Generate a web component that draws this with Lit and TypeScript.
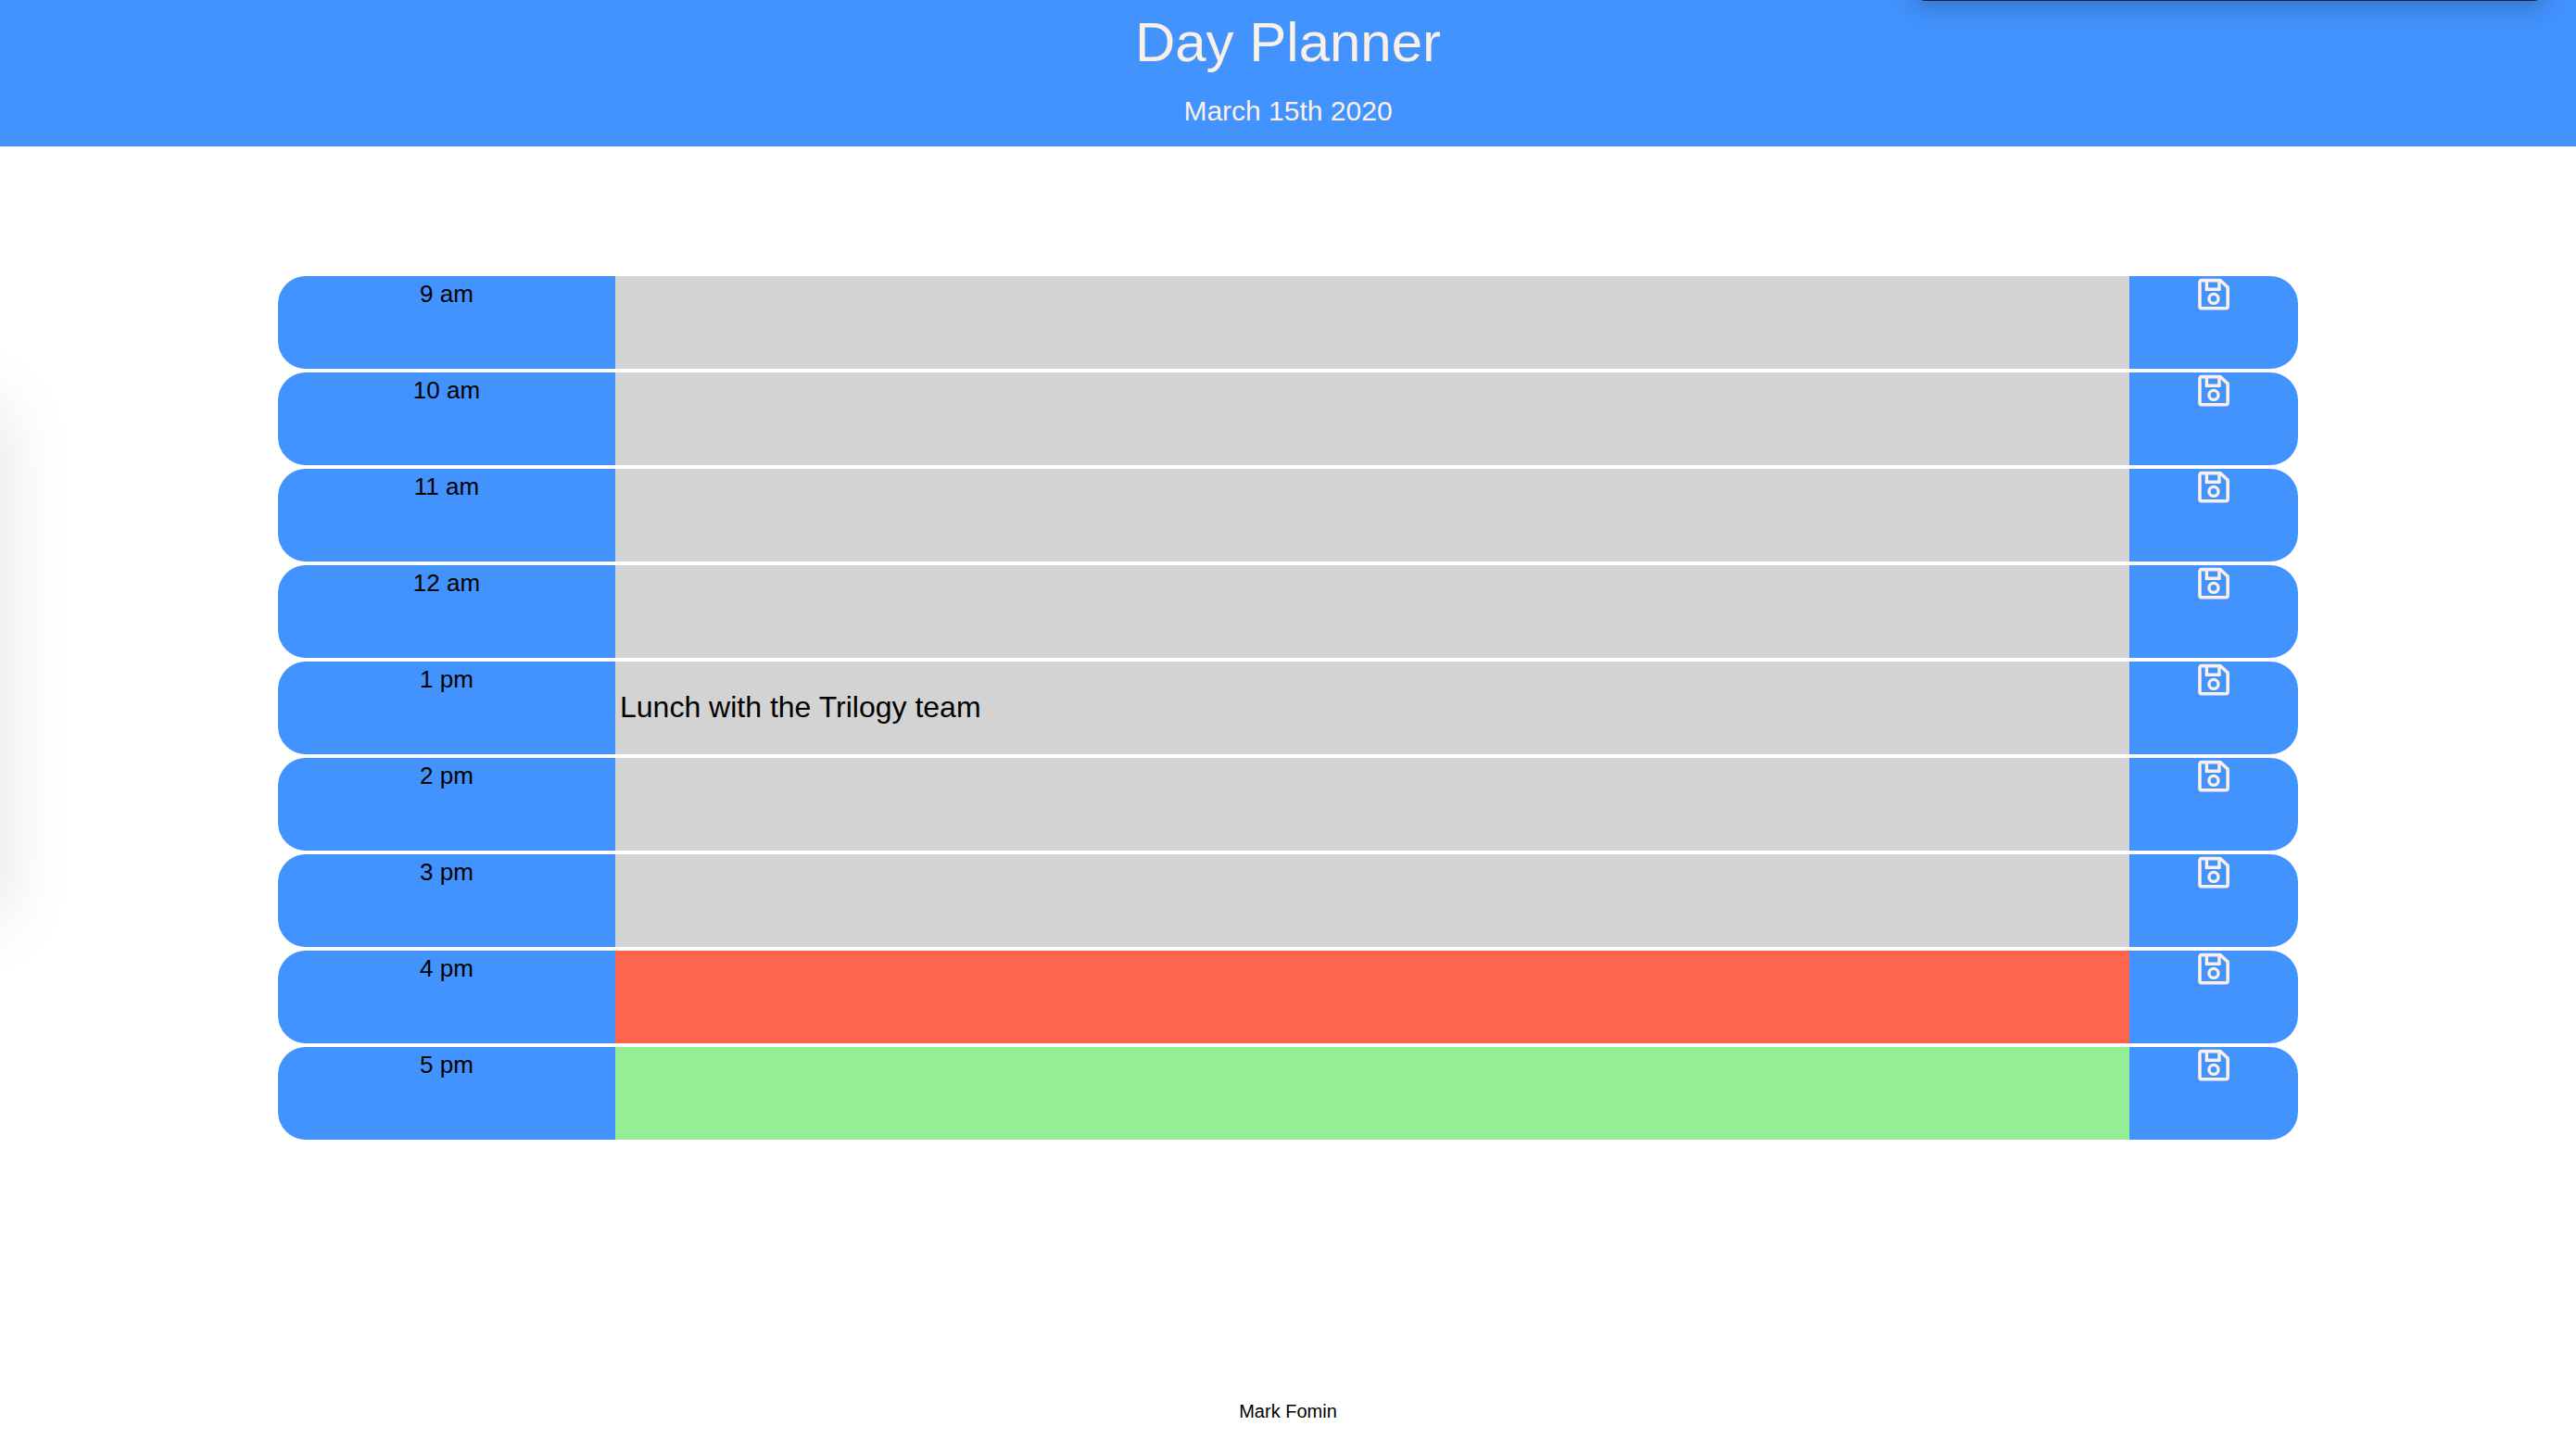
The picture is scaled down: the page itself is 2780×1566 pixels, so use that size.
import { LitElement, html, css } from "lit";
import { customElement, property, state } from "lit/decorators.js";
import { classMap } from "lit/directives/class-map.js";

type Phase = "past" | "present" | "future";

interface Slot {
  label: string;
  text: string;
  phase: Phase;
}

@customElement("hour-row")
class HourRow extends LitElement {
  @property() label = "";
  @property() text = "";
  @property() phase: Phase = "past";

  static styles = css`
    :host {
      display: block;
    }
    .row {
      display: grid;
      grid-template-columns: 364px minmax(0, 1fr) 182px;
      height: 100px;
      border-radius: 30px;
      overflow: hidden;
    }
    .hour {
      background: #4293fe;
      color: #000;
      font-size: 26px;
      line-height: 39px;
      text-align: center;
    }
    .entry {
      box-sizing: border-box;
      width: 100%;
      height: 100%;
      margin: 0;
      padding: 0 5px 2px;
      border: 0;
      border-radius: 0;
      outline-offset: -4px;
      color: #000;
      font-family: inherit;
      font-size: 32px;
    }
    .past {
      background: #d3d3d3;
    }
    .present {
      background: #fe654e;
    }
    .future {
      background: #94ee95;
    }
    .save {
      display: flex;
      justify-content: center;
      align-items: flex-start;
      margin: 0;
      padding: 0;
      border: 0;
      background: #4293fe;
      color: #faf0e8;
      cursor: pointer;
    }
    .icon {
      display: block;
      width: 40px;
      height: 40px;
    }
  `;

  private onInput(e: Event) {
    this.text = (e.target as HTMLInputElement).value;
  }

  private onSave() {
    this.dispatchEvent(new CustomEvent("save", { detail: this.text }));
  }

  render() {
    return html`
      <div class="row">
        <label class="hour" for="entry">${this.label}</label>
        <input
          id="entry"
          type="text"
          autocomplete="off"
          class=${classMap({ entry: true, [this.phase]: true })}
          .value=${this.text}
          @input=${this.onInput}
        />
        <button class="save" type="button" aria-label="Save" @click=${this.onSave}>
          <svg class="icon" viewBox="0 0 40 40" fill="none" stroke="currentColor" stroke-width="3.6" stroke-linejoin="round" aria-hidden="true">
            <path d="M7 4.600H27L35.200 12V32.800Q35.200 34.800 33.200 34.800H7Q5 34.800 5 32.800V6.600Q5 4.600 7 4.600Z" />
            <path d="M12.400 4.600V14.300H26V4.600" stroke-width="3.400" stroke-linejoin="miter" />
            <circle cx="20" cy="24.400" r="5" stroke-width="3.400" />
          </svg>
        </button>
      </div>
    `;
  }
}

@customElement("app-root")
class AppRoot extends LitElement {
  @state() private slots: Slot[] = [
    { label: "9 am", text: "", phase: "past" },
    { label: "10 am", text: "", phase: "past" },
    { label: "11 am", text: "", phase: "past" },
    { label: "12 am", text: "", phase: "past" },
    { label: "1 pm", text: "Lunch with the Trilogy team", phase: "past" },
    { label: "2 pm", text: "", phase: "past" },
    { label: "3 pm", text: "", phase: "past" },
    { label: "4 pm", text: "", phase: "present" },
    { label: "5 pm", text: "", phase: "future" },
  ];

  static styles = css`
    :host {
      position: relative;
      display: flex;
      flex-direction: column;
      min-height: 100vh;
      overflow: hidden;
      background: #fff;
      font-family: "Liberation Sans", Arial, sans-serif;
    }
    .header {
      display: flex;
      flex-direction: column;
      gap: 20px;
      padding: 10px 0 20px;
      background: #4293fe;
      color: #faf0e8;
      text-align: center;
    }
    .title,
    .date {
      margin: 0;
      font-weight: 400;
    }
    .title {
      font-size: 60px;
      line-height: 72px;
    }
    .date {
      font-size: 30px;
      line-height: 36px;
    }
    .planner {
      display: flex;
      flex-direction: column;
      gap: 4px;
      flex: 1;
      padding: 140px 300px;
    }
    .footer {
      padding-bottom: 28px;
      color: #000;
      font-size: 20px;
      line-height: 30px;
      text-align: center;
    }
    /* Soft shadows that fall onto the page from beyond its top and left edges. */
    .shade-top,
    .shade-left {
      position: absolute;
      pointer-events: none;
    }
    .shade-top {
      top: -59px;
      right: 34px;
      width: 680px;
      height: 60px;
      border-radius: 12px;
      background: #14243c;
      box-shadow: 0 4px 28px rgba(0, 0, 0, 0.28);
    }
    .shade-left {
      top: 440px;
      left: -300px;
      width: 300px;
      height: 550px;
      box-shadow: 0 0 76px rgba(0, 0, 0, 0.12);
    }
  `;

  private save(index: number, e: CustomEvent<string>) {
    this.slots = this.slots.map((s, i) => (i === index ? { ...s, text: e.detail } : s));
  }

  render() {
    return html`
      <header class="header">
        <h1 class="title">Day Planner</h1>
        <p class="date">March 15th 2020</p>
      </header>
      <main class="planner">
        ${this.slots.map(
          (s, i) => html`<hour-row
            .label=${s.label}
            .text=${s.text}
            .phase=${s.phase}
            @save=${(e: CustomEvent<string>) => this.save(i, e)}
          ></hour-row>`
        )}
      </main>
      <footer class="footer">Mark Fomin</footer>
      <div class="shade-top"></div>
      <div class="shade-left"></div>
    `;
  }
}
